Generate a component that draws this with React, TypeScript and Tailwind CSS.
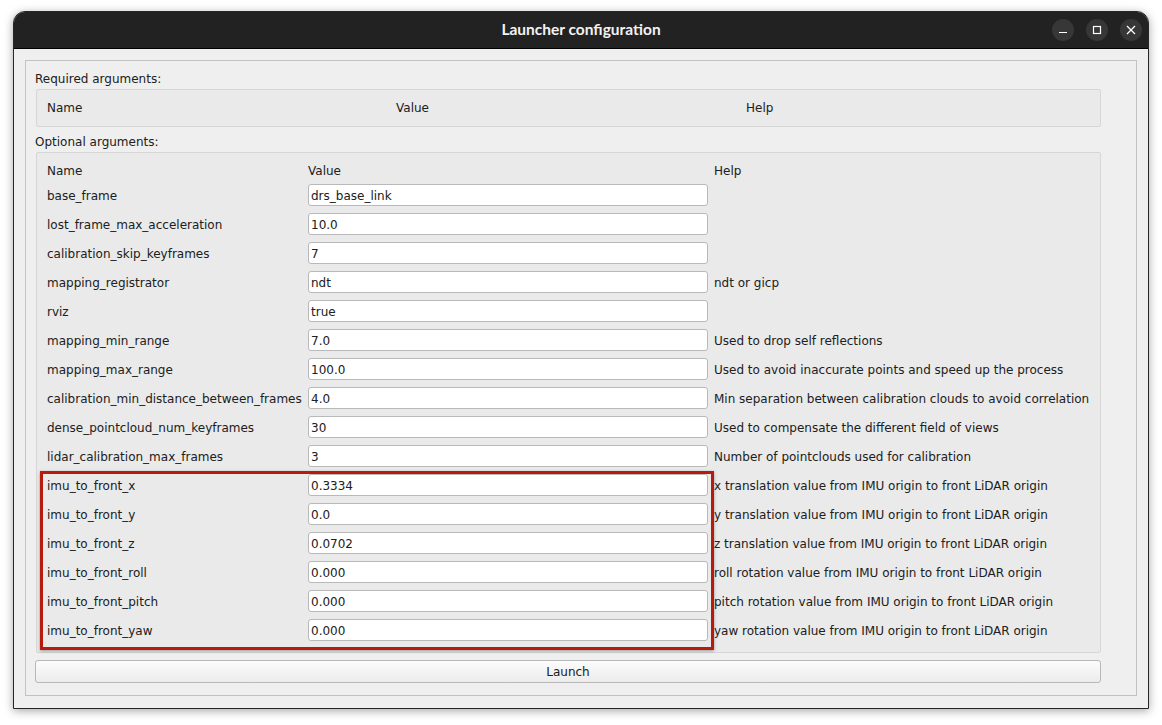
import React from "react";

const rows: [string, string, string][] = [
  ["base_frame", "drs_base_link", ""],
  ["lost_frame_max_acceleration", "10.0", ""],
  ["calibration_skip_keyframes", "7", ""],
  ["mapping_registrator", "ndt", "ndt or gicp"],
  ["rviz", "true", ""],
  ["mapping_min_range", "7.0", "Used to drop self reflections"],
  ["mapping_max_range", "100.0", "Used to avoid inaccurate points and speed up the process"],
  ["calibration_min_distance_between_frames", "4.0", "Min separation between calibration clouds to avoid correlation"],
  ["dense_pointcloud_num_keyframes", "30", "Used to compensate the different field of views"],
  ["lidar_calibration_max_frames", "3", "Number of pointclouds used for calibration"],
  ["imu_to_front_x", "0.3334", "x translation value from IMU origin to front LiDAR origin"],
  ["imu_to_front_y", "0.0", "y translation value from IMU origin to front LiDAR origin"],
  ["imu_to_front_z", "0.0702", "z translation value from IMU origin to front LiDAR origin"],
  ["imu_to_front_roll", "0.000", "roll rotation value from IMU origin to front LiDAR origin"],
  ["imu_to_front_pitch", "0.000", "pitch rotation value from IMU origin to front LiDAR origin"],
  ["imu_to_front_yaw", "0.000", "yaw rotation value from IMU origin to front LiDAR origin"],
];

const WinButton = ({ children }: { children: React.ReactNode }) => (
  <div className="flex h-[22px] w-[22px] items-center justify-center rounded-full bg-[#373737]">
    <svg width="10" height="10" viewBox="0 0 10 10" fill="none" stroke="#ffffff" strokeWidth="1.2">
      {children}
    </svg>
  </div>
);

const Row = ({ name, value, help }: { name: string; value: string; help: string }) => (
  <div className="flex h-[22px] items-center">
    <div className="w-[261px] shrink-0 whitespace-nowrap pt-[2px]">{name}</div>
    <div className="flex h-[22px] w-[400px] shrink-0 items-center rounded-[3px] border border-[#b9b9b9] bg-white pl-[2px] pt-[2px]">
      {value}
    </div>
    <div className="ml-[6px] whitespace-nowrap pt-[2px]">{help}</div>
  </div>
);

export default function App() {
  return (
    <div
      className="h-[725px] w-[1162px] overflow-hidden bg-white pl-[13px] pt-[11px] text-[12px] text-[#202020]"
      style={{ fontFamily: '"DejaVu Sans", sans-serif' }}
    >
      <div className="flex h-[698px] w-[1136px] flex-col overflow-hidden rounded-t-[12px] border border-[#262626] bg-[#efefef] shadow-[0_2px_10px_rgba(0,0,0,0.35)]">
        {/* title bar */}
        <div className="grid h-[37px] shrink-0 grid-cols-[1fr_auto_1fr] items-center border-b border-black bg-[#222222]">
          <div />
          <div
            className="text-[15.5px] font-bold text-[#f2f2f2]"
            style={{ fontFamily: "Lato, sans-serif" }}
          >
            Launcher configuration
          </div>
          <div className="flex justify-end gap-[12px] pr-[6px]">
            <WinButton>
              <path d="M1 7.5h8" />
            </WinButton>
            <WinButton>
              <rect x="1.5" y="1.5" width="7" height="7" />
            </WinButton>
            <WinButton>
              <path d="M1 1l8 8M9 1l-8 8" />
            </WinButton>
          </div>
        </div>

        {/* content */}
        <div className="px-[11px] pt-[11px]">
          <div className="flex h-[636px] flex-col border border-[#c2c2c2] pl-[9px] pt-[9px]">
            <div className="flex h-[16px] items-center pt-[2px]">Required arguments:</div>
            <div className="ml-[1px] mt-[3px] grid h-[38px] w-[1065px] grid-cols-[349px_350px_1fr] items-center rounded-[2px] border border-[#d6d6d6] bg-[#eaeaea] pl-[10px]">
              <div>Name</div>
              <div>Value</div>
              <div>Help</div>
            </div>

            <div className="mt-[6px] flex h-[16px] items-center pt-[2px]">Optional arguments:</div>
            <div className="relative ml-[1px] mt-[3px] flex h-[501px] w-[1065px] flex-col rounded-[2px] border border-[#d6d6d6] bg-[#eaeaea] pl-[10px] pt-[8px]">
              <div className="flex h-[18px] items-center pt-[2px]">
                <div className="w-[261px]">Name</div>
                <div className="w-[406px]">Value</div>
                <div>Help</div>
              </div>
              <div className="mt-[5px] flex flex-col gap-[7px]">
                {rows.map(([n, v, h]) => (
                  <Row key={n} name={n} value={v} help={h} />
                ))}
              </div>
              {/* highlight annotation */}
              <div className="pointer-events-none absolute left-[3px] top-[318px] h-[179px] w-[674px] border-[3px] border-[#b81a0c] shadow-[0_1px_3px_rgba(0,0,0,0.35)]" />
            </div>

            <div className="mt-[7px] flex h-[23px] w-[1066px] items-center justify-center rounded-[3px] border border-[#b7b7b7] bg-gradient-to-b from-[#fcfcfc] to-[#ececec]">
              Launch
            </div>
          </div>
        </div>
      </div>
    </div>
  );
}
